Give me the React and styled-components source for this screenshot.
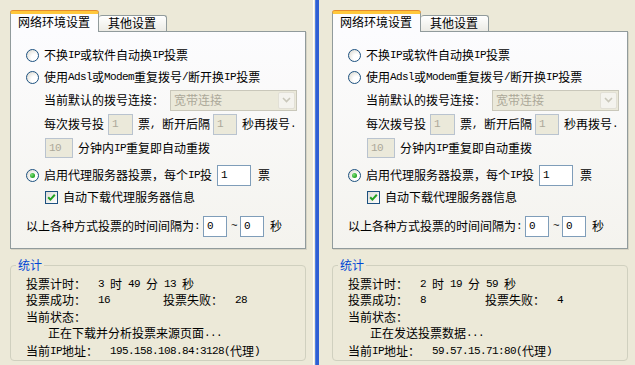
import styled, { createGlobalStyle } from "styled-components";

const GlobalStyle = createGlobalStyle`
  html, body {
    margin: 0;
    padding: 0;
    background: #ece9d8;
  }
  body {
    font-family: "Noto Sans CJK SC", "Liberation Sans", sans-serif;
    font-size: 12px;
    color: #000;
  }
`;

const Screen = styled.div`
  display: flex;
  width: 635px;
  height: 365px;
  overflow: hidden;
  background: #ece9d8;
`;

const Panel = styled.div`
  width: ${(p) => p.$w}px;
  flex-shrink: 0;
  box-sizing: border-box;
  padding: 12px 0 0 ${(p) => p.$left}px;
`;

// thin window edge between the two screenshots
const Divider = styled.div`
  width: 6px;
  flex-shrink: 0;
  background: linear-gradient(
    to right,
    #ffffff 0 1px,
    #ece9d8 1px 2px,
    #4f7fe0 2px 3px,
    #2f5fd3 3px 6px
  );
`;

const TabStrip = styled.div`
  display: flex;
  align-items: flex-end;
  height: 19px;
  position: relative;
  z-index: 1;
`;

const Tab = styled.div`
  box-sizing: border-box;
  border: 1px solid #919b9c;
  border-radius: 3px 3px 0 0;
  line-height: 14px;
  white-space: nowrap;
  ${(p) =>
    p.$active
      ? `
    height: 21px;
    margin-bottom: -1px;
    padding: 1px 8px 0 7px;
    border-top: 3px solid #ffc83c;
    box-shadow: inset 0 0 0 0 #fff, 0 -1px 0 #e68b2c;
    border-bottom: none;
    background: #fcfcfe;
  `
      : `
    height: 16px;
    padding: 0 10px 0 9px;
    border-left: none;
    border-bottom: none;
    background: linear-gradient(#ffffff, #f3f3ef 60%, #ecebe5);
  `}
`;

const TabPage = styled.div`
  width: 296px;
  height: 218px;
  box-sizing: border-box;
  border: 1px solid #919b9c;
  box-shadow: 1px 1px 0 #d6d3c4;
  background: linear-gradient(#fcfcfe, #f4f3ee);
  padding-top: 12px;
`;

const Row = styled.div`
  display: flex;
  align-items: center;
  height: 22px;
  margin-top: ${(p) => p.$mt || 0}px;
  padding-left: ${(p) => p.$indent || 0}px;
  white-space: pre;
  line-height: 14px;
`;

const M = styled.span`
  font-family: "Liberation Mono", "DejaVu Sans Mono", monospace;
  font-size: 11px;
  letter-spacing: -0.6px;
  white-space: pre;
`;

const Gap = styled.span`
  display: inline-block;
  width: ${(p) => p.$w}px;
`;

const Radio = styled.span`
  width: 13px;
  height: 13px;
  box-sizing: border-box;
  flex-shrink: 0;
  border-radius: 50%;
  border: 1px solid #1c5180;
  background: radial-gradient(circle at 70% 70%, #ffffff 0 30%, #d6d4c9 100%);
  margin-right: 5px;
  display: flex;
  align-items: center;
  justify-content: center;
  &::after {
    content: "";
    display: ${(p) => (p.$on ? "block" : "none")};
    width: 5px;
    height: 5px;
    border-radius: 50%;
    background: radial-gradient(circle at 35% 35%, #7ee07a, #21a121 70%);
  }
`;

const Check = styled.span`
  width: 13px;
  height: 13px;
  box-sizing: border-box;
  flex-shrink: 0;
  border: 1px solid #1c5180;
  background: linear-gradient(135deg, #dcdcd7, #ffffff);
  margin-right: 5px;
  display: flex;
  align-items: center;
  justify-content: center;
`;

const Box = styled.span`
  box-sizing: border-box;
  display: flex;
  align-items: center;
  flex-shrink: 0;
  width: ${(p) => p.$w}px;
  height: ${(p) => p.$h || 21}px;
  margin-left: ${(p) => p.$ml || 0}px;
  margin-right: ${(p) => p.$mr || 0}px;
  padding-left: 3px;
  border: 1px solid ${(p) => (p.$off ? "#b9c3cf" : "#7f9db9")};
  background: ${(p) => (p.$off ? "#ebe9da" : "#ffffff")};
  color: ${(p) => (p.$off ? "#aca899" : "#000")};
`;

const Combo = styled.div`
  box-sizing: border-box;
  display: flex;
  align-items: center;
  justify-content: space-between;
  width: 127px;
  height: 21px;
  margin-left: 6px;
  padding: 1px;
  border: 1px solid #c9c7ba;
  background: #ebe9da;
  color: #aca899;
`;

const ComboText = styled.span`
  padding-left: 2px;
`;

const ComboButton = styled.span`
  width: 17px;
  height: 17px;
  box-sizing: border-box;
  display: flex;
  align-items: center;
  justify-content: center;
  border: 1px solid #e2e0d6;
  border-radius: 2px;
  background: #f4f3ee;
`;

const Group = styled.fieldset`
  width: 296px;
  box-sizing: border-box;
  margin: 9px 0 0;
  padding: 4px 0 1px 15px;
  border: 1px solid #d0d0bf;
  border-radius: 4px;
  min-width: 0;
`;

const Legend = styled.legend`
  margin-left: -10px;
  padding: 0 2px;
  line-height: 14px;
  color: #0046d5;
`;

const Line = styled.div`
  display: flex;
  align-items: center;
  height: 16px;
  line-height: 14px;
  white-space: pre;
  margin-top: ${(p) => p.$mt || 0}px;
  padding-left: ${(p) => p.$indent || 0}px;
`;

const Cell = styled.span`
  display: inline-flex;
  align-items: center;
  width: ${(p) => p.$w}px;
`;

const Chevron = () => (
  <svg width="9" height="6" viewBox="0 0 9 6">
    <polyline points="1,1 4.5,4.5 8,1" fill="none" stroke="#c9c7ba" strokeWidth="1.6" />
  </svg>
);

const Tick = () => (
  <svg width="9" height="9" viewBox="0 0 9 9">
    <polyline points="1.2,4.2 3.4,6.6 7.8,1.8" fill="none" stroke="#21a121" strokeWidth="2" />
  </svg>
);

const VotePanel = ({ width, left, stats }) => (
  <Panel $w={width} $left={left}>
    <TabStrip>
      <Tab $active>网络环境设置</Tab>
      <Tab>其他设置</Tab>
    </TabStrip>
    <TabPage>
      <Row $indent={15}>
        <Radio />
        不换<M>IP</M>或软件自动换<M>IP</M>投票
      </Row>
      <Row $indent={15}>
        <Radio />
        使用<M>Adsl</M>或<M>Modem</M>重复拨号<M>/</M>断开换<M>IP</M>投票
      </Row>
      <Row $indent={33} $mt={1}>
        当前默认的拨号连接：
        <Combo>
          <ComboText>宽带连接</ComboText>
          <ComboButton>
            <Chevron />
          </ComboButton>
        </Combo>
      </Row>
      <Row $indent={33} $mt={2}>
        每次拨号投
        <Box $off $w={25} $ml={4} $mr={5}>
          <M>1</M>
        </Box>
        票<M>, </M>断开后隔
        <Box $off $w={24} $ml={3} $mr={5}>
          <M>1</M>
        </Box>
        秒再拨号<M>.</M>
      </Row>
      <Row $indent={34} $mt={2}>
        <Box $off $w={28} $h={20} $mr={5}>
          <M>10</M>
        </Box>
        分钟内<M>IP</M>重复即自动重拨
      </Row>
      <Row $indent={15} $mt={5}>
        <Radio $on />
        启用代理服务器投票，每个<M>IP</M>投
        <Box $w={34} $ml={5} $mr={7}>
          <M>1</M>
        </Box>
        票
      </Row>
      <Row $indent={34}>
        <Check>
          <Tick />
        </Check>
        自动下载代理服务器信息
      </Row>
      <Row $indent={15} $mt={7}>
        以上各种方式投票的时间间隔为<M>:</M>
        <Box $w={24} $ml={3} $mr={4}>
          <M>0</M>
        </Box>
        <M>~</M>
        <Box $w={24} $ml={3} $mr={6}>
          <M>0</M>
        </Box>
        秒
      </Row>
    </TabPage>
    <Group>
      <Legend>统计</Legend>
      <Line>
        投票计时：<M>{`  ${stats.h} `}</M>时<M>{` ${stats.m} `}</M>分<M>{` ${stats.s} `}</M>秒
      </Line>
      <Line>
        <Cell $w={137}>
          投票成功：<M>{`  ${stats.ok}`}</M>
        </Cell>
        投票失败：<M>{`  ${stats.fail}`}</M>
      </Line>
      <Line $mt={1}>当前状态：</Line>
      <Line $indent={22}>{stats.status}<M>...</M></Line>
      <Line $mt={2}>
        当前<M>IP</M>地址：<M>{`  ${stats.ip}`}</M>
        <M>(</M>代理<M>)</M>
      </Line>
    </Group>
  </Panel>
);

const App = () => (
  <Screen>
    <GlobalStyle />
    <VotePanel
      width={313}
      left={10}
      stats={{
        h: "3",
        m: "49",
        s: "13",
        ok: "16",
        fail: "28",
        status: "正在下载并分析投票来源页面",
        ip: "195.158.108.84:3128",
      }}
    />
    <Divider />
    <VotePanel
      width={316}
      left={13}
      stats={{
        h: "2",
        m: "19",
        s: "59",
        ok: "8",
        fail: "4",
        status: "正在发送投票数据",
        ip: "59.57.15.71:80",
      }}
    />
  </Screen>
);

export default App;
